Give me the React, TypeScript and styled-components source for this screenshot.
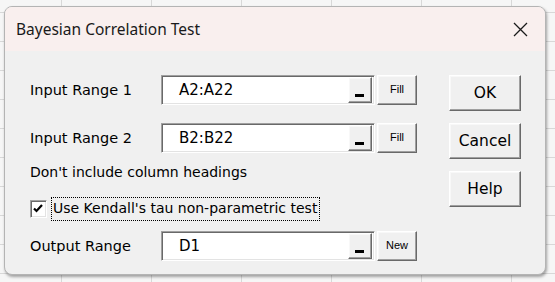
import styled, { createGlobalStyle } from 'styled-components'

const Global = createGlobalStyle`
    html, body {
        margin: 0;
        padding: 0;
        width: 555px;
        height: 282px;
        overflow: hidden;
    }
`

const Desk = styled.div`
    width: 555px;
    height: 282px;
    box-sizing: border-box;
    padding: 6px 0 0 4px;
    background-color: #f6f6f6;
    background-image:
        repeating-linear-gradient(90deg, transparent 0 61px, #d8d8d8 61px 62px, transparent 62px 90px),
        repeating-linear-gradient(180deg, transparent 0 12px, #d8d8d8 12px 13px, transparent 13px 29px);
`

const Dialog = styled.div`
    width: 542px;
    height: 269px;
    box-sizing: border-box;
    border: 1px solid #b4b4b4;
    border-radius: 8px;
    overflow: hidden;
    background: #f0f0f0;
    box-shadow: 1px 2px 3px rgba(0, 0, 0, 0.35);
    display: flex;
    flex-direction: column;
`

const TitleBar = styled.div`
    height: 44px;
    flex: none;
    background: #f9efee;
    display: flex;
    align-items: center;
    justify-content: space-between;
    padding: 0 17px 0 11px;
    font-family: "Noto Sans", "Open Sans", sans-serif;
    font-size: 15.5px;
    color: #1a1a1a;
`

const Body = styled.div`
    flex: 1;
    display: flex;
    padding: 24px 0 0 25px;
    gap: 32px;
    font-family: "DejaVu Sans", Tahoma, sans-serif;
    font-size: 14.5px;
    color: #000;
`

const Form = styled.div`
    display: flex;
    flex-direction: column;
    flex: none;
    width: 387px;
`

const Row = styled.div<{ $mt?: number }>`
    display: flex;
    align-items: center;
    height: 30px;
    margin-top: ${p => p.$mt ?? 0}px;
`

const Label = styled.div`
    width: 131px;
    flex: none;
`

const Note = styled.div`
    margin-top: 8px;
    height: 22px;
    line-height: 22px;
    font-size: 14px;
`

const Field = styled.div`
    width: 214px;
    height: 30px;
    box-sizing: border-box;
    border: 1px solid;
    border-color: #a0a0a0 #ffffff #ffffff #a0a0a0;
    box-shadow: inset 1px 1px 0 #696969, inset -1px -1px 0 #e3e3e3;
    background: #fff;
    display: flex;
    align-items: center;
    padding: 2px 2px 2px 17px;
`

const FieldText = styled.span`
    flex: 1;
    font-size: 15px;
`

const raised = `
    box-sizing: border-box;
    background: #f0f0f0;
    border: 1px solid;
    border-color: #ffffff #696969 #696969 #ffffff;
    box-shadow: inset -1px -1px 0 #a0a0a0, inset 1px 1px 0 #f8f8f8;
`

const RefButton = styled.div`
    ${raised}
    width: 24px;
    height: 26px;
    display: flex;
    justify-content: center;
    align-items: flex-end;
    padding-bottom: 5px;
    span {
        width: 9px;
        height: 3px;
        background: #000;
        margin-right: 1px;
    }
`

const SmallButton = styled.div`
    ${raised}
    margin-left: 2px;
    width: 40px;
    height: 30px;
    display: flex;
    align-items: center;
    justify-content: center;
    font-family: "Liberation Sans", Arial, sans-serif;
    font-size: 11px;
    padding-bottom: 2px;
`

const CheckRow = styled.label`
    display: flex;
    align-items: center;
    margin-top: 14px;
    height: 23px;
`

const Box = styled.span`
    width: 17px;
    height: 18px;
    box-sizing: border-box;
    border: 1px solid;
    border-color: #a0a0a0 #ffffff #ffffff #a0a0a0;
    box-shadow: inset 1px 1px 0 #696969, inset -1px -1px 0 #e3e3e3;
    background: #fff;
    display: flex;
    align-items: center;
    justify-content: flex-start;
    padding-left: 2px;
    margin-right: 4px;
`

const CheckText = styled.span`
    border: 1px dotted #000;
    padding: 0 2px 1px 1px;
    height: 21px;
    line-height: 21px;
    font-size: 14px;
`

const Side = styled.div`
    display: flex;
    flex-direction: column;
    gap: 12px;
`

const CmdButton = styled.div`
    ${raised}
    width: 72px;
    height: 36px;
    display: flex;
    align-items: center;
    justify-content: center;
    font-size: 15.5px;
`

export default function App() {
    return <>
        <Global />
        <Desk>
            <Dialog>
                <TitleBar>
                    <span>Bayesian Correlation Test</span>
                    <svg width="15" height="15" viewBox="0 0 15 15">
                        <path d="M1 1 L14 14 M14 1 L1 14" stroke="#1a1a1a" strokeWidth="1.3" />
                    </svg>
                </TitleBar>
                <Body>
                    <Form>
                        <Row>
                            <Label>Input Range 1</Label>
                            <Field><FieldText>A2:A22</FieldText><RefButton><span /></RefButton></Field>
                            <SmallButton>Fill</SmallButton>
                        </Row>
                        <Row $mt={18}>
                            <Label>Input Range 2</Label>
                            <Field><FieldText>B2:B22</FieldText><RefButton><span /></RefButton></Field>
                            <SmallButton>Fill</SmallButton>
                        </Row>
                        <Note>Don't include column headings</Note>
                        <CheckRow>
                            <Box>
                                <svg width="10" height="9" viewBox="0 0 10 9">
                                    <path d="M1 4.5 L3.5 7 L9 1" stroke="#000" strokeWidth="2.2" fill="none" />
                                </svg>
                            </Box>
                            <CheckText>Use Kendall's tau non-parametric test</CheckText>
                        </CheckRow>
                        <Row $mt={11}>
                            <Label>Output Range</Label>
                            <Field><FieldText>D1</FieldText><RefButton><span /></RefButton></Field>
                            <SmallButton>New</SmallButton>
                        </Row>
                    </Form>
                    <Side>
                        <CmdButton>OK</CmdButton>
                        <CmdButton>Cancel</CmdButton>
                        <CmdButton>Help</CmdButton>
                    </Side>
                </Body>
            </Dialog>
        </Desk>
    </>
}
